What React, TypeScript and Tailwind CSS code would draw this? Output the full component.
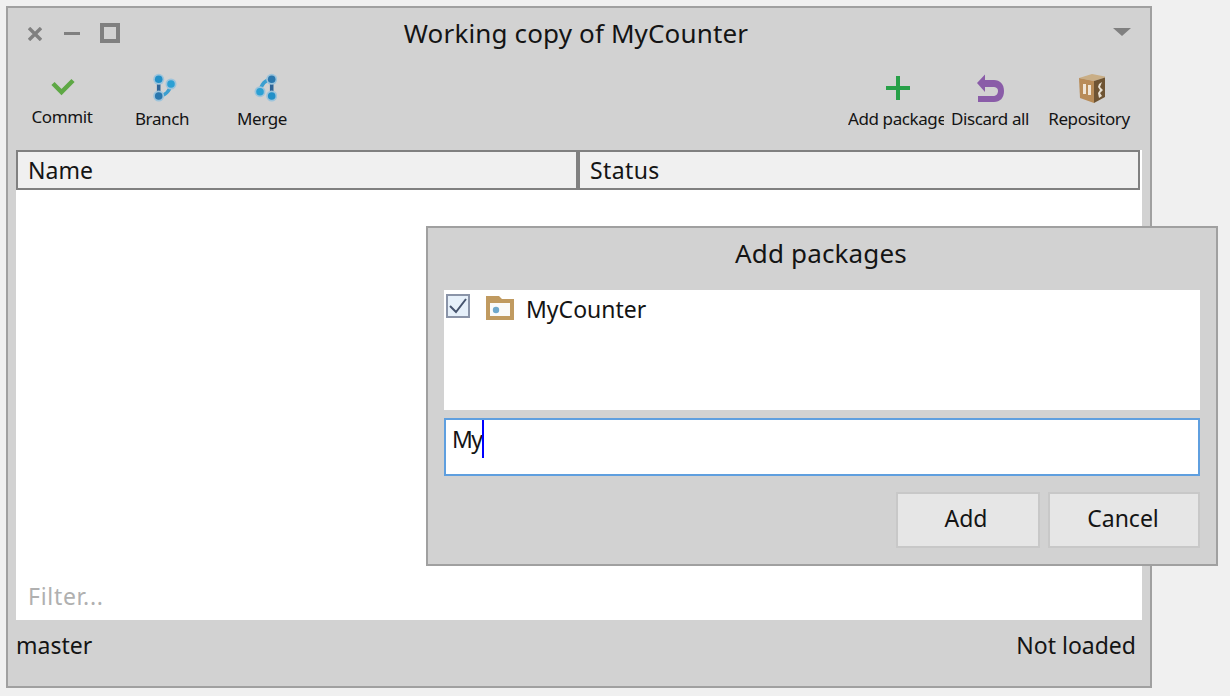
const font = "font-['Noto_Sans','Liberation_Sans',sans-serif]";

function CommitIcon() {
  return (
    <svg viewBox="47 72 30 30" className="w-[30px] h-[30px]">
      <path d="M53 83.5 L61.5 92 L73 80.5" fill="none" stroke="#5ea845" strokeWidth="4.5" />
    </svg>
  );
}

function BranchIcon() {
  return (
    <svg viewBox="146 72 30 30" className="w-[30px] h-[30px]">
      <path d="M157.7 79.3 V96" stroke="#2f6496" strokeWidth="3.6" fill="none" />
      <path d="M157.7 96 C164 96 169 91 170 84" stroke="#3b9fd0" strokeWidth="3.4" fill="none" />
      <circle cx="157.7" cy="79.3" r="5.5" fill="#9cc4dc" />
      <circle cx="157.7" cy="96" r="5.5" fill="#9cc4dc" />
      <circle cx="170" cy="84" r="5.5" fill="#9cc4dc" />
      <circle cx="157.7" cy="79.3" r="3.8" fill="#2290c8" />
      <circle cx="157.7" cy="96" r="3.8" fill="#2b78ae" />
      <circle cx="170" cy="84" r="3.8" fill="#2ba0d4" />
    </svg>
  );
}

function MergeIcon() {
  return (
    <svg viewBox="247 72 30 30" className="w-[30px] h-[30px]">
      <path d="M271.7 79.3 V96" stroke="#2f6496" strokeWidth="3.6" fill="none" />
      <path d="M260 91.7 C261 85 265 80 271.7 79.3" stroke="#3b9fd0" strokeWidth="3.4" fill="none" />
      <circle cx="271.7" cy="79.3" r="5.5" fill="#9cc4dc" />
      <circle cx="271.7" cy="96" r="5.5" fill="#9cc4dc" />
      <circle cx="260" cy="91.7" r="5.5" fill="#9cc4dc" />
      <circle cx="271.7" cy="79.3" r="3.8" fill="#2b78ae" />
      <circle cx="271.7" cy="96" r="3.8" fill="#2290c8" />
      <circle cx="260" cy="91.7" r="3.8" fill="#2ba0d4" />
    </svg>
  );
}

function PlusIcon() {
  return (
    <svg viewBox="883 72 30 30" className="w-[30px] h-[30px]">
      <path d="M896 76 h4 v10 h10 v4 h-10 v10 h-4 v-10 h-10 v-4 h10 z" fill="#27a048" />
    </svg>
  );
}

function UndoIcon() {
  return (
    <svg viewBox="975 72 30 30" className="w-[30px] h-[30px]">
      <path d="M977 83 L985 74.5 V80 H994 C1000 80 1004 84 1004 91 C1004 98 1000 102 994 102 H978 V96 H993 C996 96 998 94 998 91 C998 88 996 87 993 87 H985 V92 Z" fill="#8a5ca8" />
    </svg>
  );
}

function BoxIcon() {
  return (
    <svg viewBox="1073 71 32 32" className="w-[32px] h-[32px]">
      <path d="M1079 78 L1092 74 L1107 77 L1094 81 Z" fill="#c9ae86" />
      <path d="M1079 78 L1094 81 L1094 103 L1080 98 Z" fill="#b88c58" />
      <path d="M1094 81 L1107 77 L1107 96 L1094 103 Z" fill="#6e5433" />
      <path d="M1083 84 h3 v10 h-3 z M1088 85 h3 v10 h-3 z" fill="#f0e6d6" />
      <path d="M1099 84 L1102 82 L1100 87 L1103 90 L1100 93 L1102 96 L1099 98 L1098 93 L1100 90 L1098 87 Z" fill="#e8e0d2" />
    </svg>
  );
}

function FolderIcon() {
  return (
    <svg viewBox="0 0 28 24" className="w-[28px] h-[24px] shrink-0">
      <path d="M0 0 H13 L16 3 H28 V24 H0 Z" fill="#c09a60" />
      <rect x="4" y="7" width="20" height="13" fill="#fafafa" />
      <circle cx="10" cy="14" r="3.2" fill="#6fa8cc" />
    </svg>
  );
}

function ToolButton({ icon, label, className, labelClass = "" }: { icon: React.ReactNode; label: string; className: string; labelClass?: string }) {
  return (
    <div className={`flex flex-col items-center ${className}`}>
      <div className="h-[30px] flex items-center justify-center">{icon}</div>
      <span className={`mt-[5px] text-[17px] tracking-[-0.4px] leading-[24px] whitespace-nowrap ${labelClass}`}>{label}</span>
    </div>
  );
}

function WindowControls() {
  return (
    <div className="flex items-center w-[120px]">
      <svg viewBox="0 0 14 14" className="w-[14px] h-[14px] ml-[20px] mt-[2px]">
        <path d="M1 1 L13 13 M13 1 L1 13" stroke="#808080" strokeWidth="3.4" />
      </svg>
      <div className="w-[16px] h-[3px] bg-[#808080] ml-[22px]" />
      <div className="w-[20px] h-[20px] border-[4px] border-[#808080] ml-[20px]" />
    </div>
  );
}

export default function App() {
  return (
    <div className={`w-[1230px] h-[696px] bg-[#f0f0f0] p-[6px] relative overflow-hidden text-[#141414] ${font}`}>
      <div className="w-[1146px] h-[682px] border-2 border-[#a0a0a0] bg-[#d2d2d2] flex flex-col">
        <div className="h-[50px] flex items-center shrink-0">
          <WindowControls />
          <div className="flex-1 text-center text-[26px] tracking-[0.15px] pr-[6px]">Working copy of MyCounter</div>
          <div className="w-[120px] flex justify-end pr-[19px]">
            <svg viewBox="0 0 18 8" className="w-[18px] h-[8px] mt-[-2px]">
              <path d="M0 0 H18 L9 8 Z" fill="#808080" />
            </svg>
          </div>
        </div>

        <div className="h-[92px] pt-[14px] flex justify-between shrink-0 px-[4px]">
          <div className="flex">
            <ToolButton icon={<CommitIcon />} label="Commit" className="w-[100px]" labelClass="-translate-y-[2px]" />
            <ToolButton icon={<BranchIcon />} label="Branch" className="w-[100px]" />
            <ToolButton icon={<MergeIcon />} label="Merge" className="w-[100px]" />
          </div>
          <div className="flex pr-[4px]">
            <div className="w-[96px] overflow-hidden">
              <div className="flex flex-col items-start">
                <div className="h-[30px] ml-[35px] flex items-center"><PlusIcon /></div>
                <span className="mt-[5px] text-[17px] tracking-[-0.4px] leading-[24px] whitespace-nowrap">Add package</span>
              </div>
            </div>
            <ToolButton icon={<UndoIcon />} label="Discard all" className="w-[92px]" />
            <ToolButton icon={<BoxIcon />} label="Repository" className="w-[106px]" />
          </div>
        </div>

        <div className="ml-[8px] w-[1126px] flex-1 flex flex-col bg-white">
          <div className="w-[1124px] h-[40px] flex bg-[#f0f0f0] border-2 border-[#808080] text-[23px] shrink-0">
            <div className="w-[562px] pl-[10px] border-r-4 border-[#808080] leading-[36px]">Name</div>
            <div className="flex-1 pl-[10px] leading-[36px] tracking-[0.4px]">Status</div>
          </div>
          <div className="flex-1" />
          <div className="h-[46px] pl-[12px] text-[23px] tracking-[0.7px] text-[#b0b0b0] leading-[44px]">Filter...</div>
        </div>

        <div className="h-[66px] flex justify-between items-start pl-[8px] pr-[14px] pt-[8px] text-[23px] leading-[34px] shrink-0">
          <span>master</span>
          <span>Not loaded</span>
        </div>
      </div>

      {/* dialog floats over the window */}
      <div className="absolute left-[426px] top-[226px] w-[792px] h-[340px] border-2 border-[#a0a0a0] bg-[#d2d2d2] px-[16px] flex flex-col">
        <div className="h-[62px] text-center text-[26px] leading-[50px] tracking-[0.15px] pr-[2px] shrink-0">Add packages</div>
        <div className="h-[120px] bg-white flex items-start pt-[4px] pl-[2px] shrink-0">
          <div className="w-[24px] h-[24px] border-2 border-[#8a94a8] bg-[#e6f0fa] shrink-0">
            <svg viewBox="0 0 20 20" className="w-[20px] h-[20px]">
              <path d="M2 10 L8 16 L18 3" fill="none" stroke="#46546e" strokeWidth="2" />
            </svg>
          </div>
          <div className="ml-[16px] mt-[2px]"><FolderIcon /></div>
          <span className="ml-[12px] text-[23px] leading-[30px]">MyCounter</span>
        </div>
        <div className="mt-[8px] h-[58px] border-2 border-[#5f9fdf] bg-white pl-[6px] flex items-start shrink-0">
          <span className="text-[23px] tracking-[-1.5px] leading-[38px]">My</span>
          <div className="w-[2px] h-[38px] bg-[#0000ff]" />
        </div>
        <div className="mt-[16px] flex justify-end gap-[8px]">
          <div className="w-[144px] h-[56px] border-2 border-[#c8c8c8] bg-[#e6e6e6] text-[23px] flex items-center justify-center pb-[4px] pr-[4px]">Add</div>
          <div className="w-[152px] h-[56px] border-2 border-[#c8c8c8] bg-[#e6e6e6] text-[23px] flex items-center justify-center pb-[4px] pr-[2px]">Cancel</div>
        </div>
      </div>
    </div>
  );
}
